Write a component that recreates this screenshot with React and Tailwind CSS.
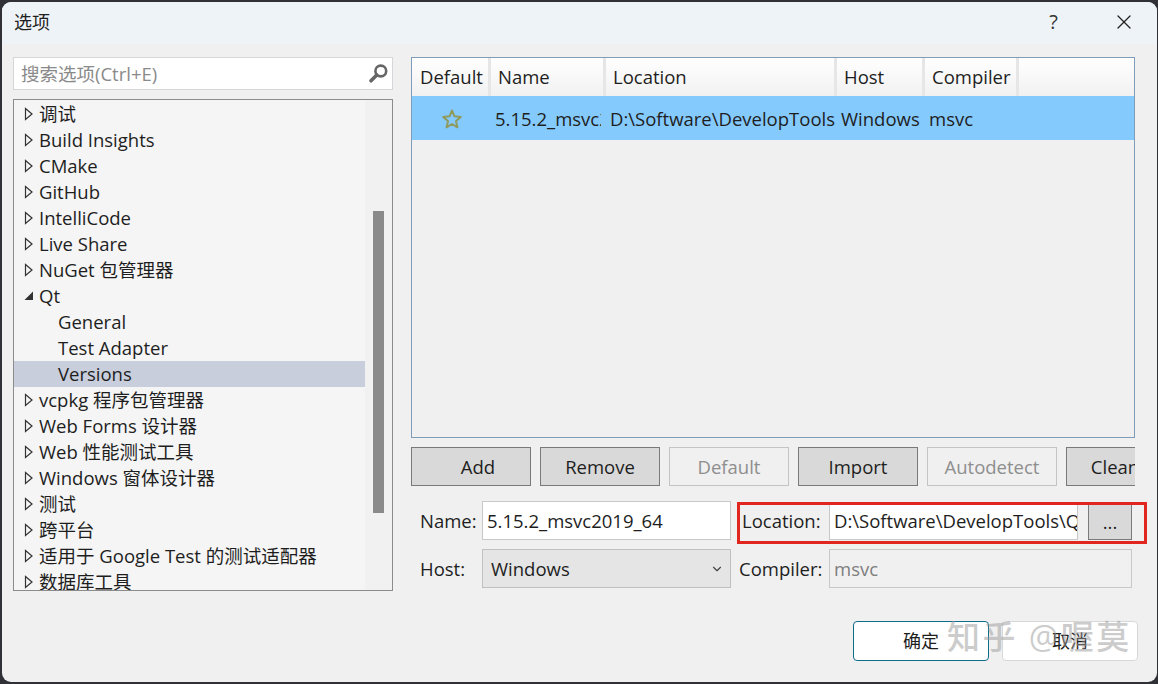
import { ChevronDown, X } from 'lucide-react';

const FONT = "font-['Open_Sans','Noto_Sans_CJK_SC',sans-serif]";

const treeItems = [
  { label: '调试', arrow: 'closed' },
  { label: 'Build Insights', arrow: 'closed' },
  { label: 'CMake', arrow: 'closed' },
  { label: 'GitHub', arrow: 'closed' },
  { label: 'IntelliCode', arrow: 'closed' },
  { label: 'Live Share', arrow: 'closed' },
  { label: 'NuGet 包管理器', arrow: 'closed' },
  { label: 'Qt', arrow: 'open' },
  { label: 'General', child: true },
  { label: 'Test Adapter', child: true },
  { label: 'Versions', child: true, selected: true },
  { label: 'vcpkg 程序包管理器', arrow: 'closed' },
  { label: 'Web Forms 设计器', arrow: 'closed' },
  { label: 'Web 性能测试工具', arrow: 'closed' },
  { label: 'Windows 窗体设计器', arrow: 'closed' },
  { label: '测试', arrow: 'closed' },
  { label: '跨平台', arrow: 'closed' },
  { label: '适用于 Google Test 的测试适配器', arrow: 'closed' },
  { label: '数据库工具', arrow: 'closed' },
];

const columns = [
  { label: 'Default', width: 'w-[79px]', pad: 'pl-[8px]' },
  { label: 'Name', width: 'w-[115px]', pad: 'pl-[7px]' },
  { label: 'Location', width: 'w-[231px]', pad: 'pl-[7px]' },
  { label: 'Host', width: 'w-[88px]', pad: 'pl-[7px]' },
  { label: 'Compiler', width: 'w-[94px]', pad: 'pl-[7px]' },
];

const actions = [
  { label: 'Add', width: 'w-[120px]', extra: 'pl-[14px]' },
  { label: 'Remove', width: 'w-[120px]' },
  { label: 'Default', width: 'w-[120px]', disabled: true },
  { label: 'Import', width: 'w-[120px]' },
  { label: 'Autodetect', width: 'w-[130px]', disabled: true },
  { label: 'Clean', width: 'w-[98px]' },
];

const TreeArrow = ({ type }) => (
  <svg width="12" height="16" viewBox="0 0 12 16" className="shrink-0">
    {type === 'open' ? (
      <path d="M11 3.5V12H2.5Z" fill="#333333" />
    ) : (
      <path d="M3.5 2.5L10 8L3.5 13.5Z" fill="none" stroke="#333333" strokeWidth="1.2" />
    )}
  </svg>
);

const SearchIcon = () => (
  <svg width="21" height="21" viewBox="0 0 21 21">
    <circle cx="12.8" cy="8" r="5.4" fill="none" stroke="#666666" strokeWidth="2.6" />
    <path d="M8.8 12L3 17.8" stroke="#666666" strokeWidth="3.6" strokeLinecap="round" />
  </svg>
);

const Star = () => (
  <svg width="22" height="22" viewBox="0 0 22 22">
    <path
      d="M11 2.5L13.5 8.3L19.8 8.9L15 13.1L16.4 19.3L11 16L5.6 19.3L7 13.1L2.2 8.9L8.5 8.3Z"
      fill="none"
      stroke="#8f9a5e"
      strokeWidth="2"
      strokeLinejoin="round"
    />
  </svg>
);

export default function App() {
  return (
    <div className={`${FONT} w-[1158px] h-[684px] bg-[#2f3136] pt-[2px] pb-[2px] pl-[2px] pr-[1px] overflow-hidden text-[18.5px] text-[#1e1e1e]`}>
      <div className="relative w-full h-full flex flex-col rounded-t-[9px] rounded-b-[9px] bg-[#f0f0f0] overflow-hidden">
        <div className="h-[42px] shrink-0 flex items-center bg-[#eef3f8] pl-[12px] pb-[2px]">
          <span className="flex-1 text-[18px]">选项</span>
          <span className="mr-[54px] text-[20px] text-[#333333]">?</span>
          <X size={24} strokeWidth={1.3} className="mr-[21px] text-[#222222]" />
        </div>

        <div className="flex-1 flex pt-[13px] pl-[11px]">
          {/* left column */}
          <div className="w-[380px] shrink-0 flex flex-col gap-[9px]">
            <div className="h-[33px] flex items-center justify-between bg-white border border-[#d4d6da] pl-[7px] pr-[3px] text-[#8a8a8a]">
              <span className="pt-[1px]">搜索选项(Ctrl+E)</span>
              <SearchIcon />
            </div>
            <div className="h-[492px] flex border border-[#8c8c8c] bg-[#f5f5f5] overflow-hidden">
              <div className="w-[351px] pt-[1px]">
                {treeItems.map((item) => (
                  <div
                    key={item.label}
                    className={`h-[26px] shrink-0 flex items-center leading-none whitespace-nowrap ${item.selected ? 'bg-[#c9cedc]' : ''} ${item.child ? 'pl-[44px]' : 'pl-[8px] gap-[5px]'}`}
                  >
                    {item.arrow && <TreeArrow type={item.arrow} />}
                    <span>{item.label}</span>
                  </div>
                ))}
              </div>
              <div className="flex-1 bg-[#f1f1f1] pl-[8px] pt-[111px]">
                <div className="w-[11px] h-[302px] bg-[#8a8a8a]" />
              </div>
            </div>
          </div>

          {/* right column */}
          <div className="ml-[18px] w-[724px] shrink-0 flex flex-col">
            <div className="h-[381px] border border-[#7f9db9] bg-[#f0f0f0]">
              <div className="h-[38px] flex bg-gradient-to-b from-white to-[#f1f1f1]">
                {columns.map((col) => (
                  <div key={col.label} className={`${col.width} ${col.pad} h-full flex items-center border-r-[3px] border-[#e6e6e6]`}>
                    {col.label}
                  </div>
                ))}
              </div>
              <div className="h-[44px] flex items-center bg-[#85cafd] pt-[2px]">
                <div className="w-[79px] flex justify-center"><Star /></div>
                <div className="w-[110px] overflow-hidden whitespace-nowrap pl-[4px]">5.15.2_msvc2019_64</div>
                <div className="ml-[9px] w-[231px] overflow-hidden whitespace-nowrap">D:\Software\DevelopTools</div>
                <div className="w-[88px]">Windows</div>
                <div>msvc</div>
              </div>
            </div>

            <div className="mt-[9px] h-[39px] flex gap-[9px] overflow-hidden">
              {actions.map((btn) => (
                <div
                  key={btn.label}
                  className={`${btn.width} ${btn.extra || ''} shrink-0 flex items-center justify-center overflow-hidden border ${btn.disabled ? 'bg-[#f0f0f0] border-[#c4c4c4] text-[#8e8e8e]' : 'bg-[#d9d9d9] border-[#7a7a7a]'}`}
                >
                  {btn.label}
                </div>
              ))}
            </div>

            <div className="mt-[15px] h-[39px] flex items-center">
              <span className="w-[71px] pl-[9px] pt-[1px]">Name:</span>
              <div className="w-[249px] h-full flex items-center bg-white border border-[#c8c8c8] pl-[4px]">5.15.2_msvc2019_64</div>
              <span className="w-[98px] pl-[11px] pt-[1px]">Location:</span>
              <div className="w-[249px] h-[37px] self-end flex items-center bg-white border border-[#c8c8c8] pl-[4px] pb-[2px] overflow-hidden whitespace-nowrap">D:\Software\DevelopTools\Qt</div>
              <div className="ml-[10px] w-[44px] h-[37px] self-end flex items-center justify-center bg-[#d9d9d9] border border-[#7a7a7a]">...</div>
            </div>

            <div className="mt-[9px] h-[39px] flex items-center">
              <span className="w-[71px] pl-[9px] pt-[1px]">Host:</span>
              <div className="w-[249px] h-full flex items-center justify-between bg-[#e5e5e5] border border-[#c0c0c0] pl-[8px] pr-[6px]">
                <span>Windows</span>
                <ChevronDown size={14} strokeWidth={2} className="text-[#444444]" />
              </div>
              <span className="w-[98px] pl-[8px] pt-[1px]">Compiler:</span>
              <div className="w-[303px] h-full flex items-center bg-[#f0f0f0] border border-[#c8c8c8] pl-[4px] text-[#7e7e7e]">msvc</div>
            </div>
          </div>
        </div>

        <div className="absolute left-[735px] top-[500px] w-[410px] h-[42px] border-[3px] border-[#e0261e] pointer-events-none" />

        <div className="h-[63px] shrink-0 flex items-start justify-end gap-[13px] pr-[19px] pt-[2px]">
          <div className="w-[136px] h-[40px] flex items-center justify-center bg-white border border-[#0f6b8c] rounded-[4px] text-[18px]">确定</div>
          <div className="w-[136px] h-[40px] flex items-center justify-center bg-white border border-[#d8d8d8] rounded-[4px] text-[18px]">取消</div>
        </div>

        <div className="absolute left-[945px] top-[618px] text-[33px] font-medium leading-none tracking-[2.4px] whitespace-nowrap text-[#9a9a9a]/50 pointer-events-none">知乎 @喔莫</div>
      </div>
    </div>
  );
}
